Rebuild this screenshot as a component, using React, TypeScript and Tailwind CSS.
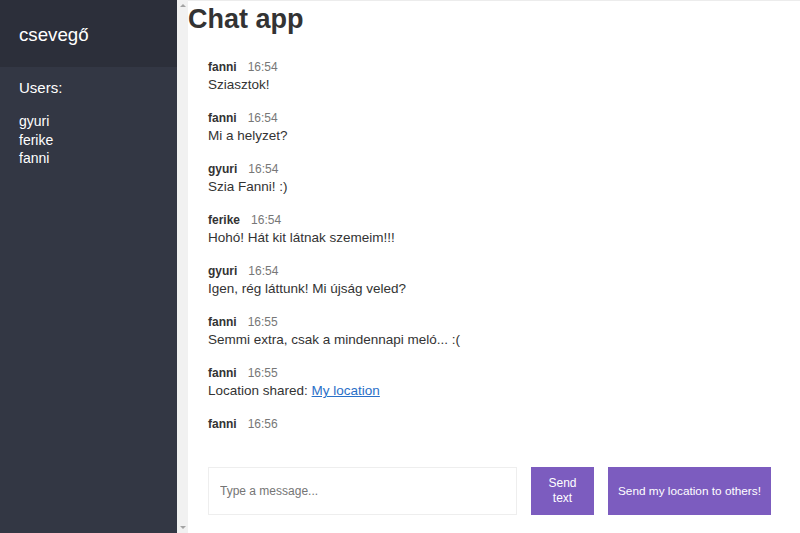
import React from "react";

const messages = [
  { name: "fanni", time: "16:54", text: "Sziasztok!" },
  { name: "fanni", time: "16:54", text: "Mi a helyzet?" },
  { name: "gyuri", time: "16:54", text: "Szia Fanni! :)" },
  { name: "ferike", time: "16:54", text: "Hohó! Hát kit látnak szemeim!!!" },
  { name: "gyuri", time: "16:54", text: "Igen, rég láttunk! Mi újság veled?" },
  { name: "fanni", time: "16:55", text: "Semmi extra, csak a mindennapi meló... :(" },
  { name: "fanni", time: "16:55", text: "", link: true },
  { name: "fanni", time: "16:56", text: "" },
];

export default function App() {
  return (
    <div
      className="flex h-[533px] w-[800px] overflow-hidden bg-white text-[#333]"
      style={{ fontFamily: '"Liberation Sans", Arial, sans-serif' }}
    >
      {/* Sidebar */}
      <div className="flex w-[177px] shrink-0 flex-col bg-[#333744] text-white">
        <div className="h-[67px] bg-[#2c2f3a] px-[19px] pt-[24px] text-[18.72px] leading-[22px]">
          csevegő
        </div>
        <div className="px-[19px] pt-[12px] text-[15px] leading-[18px]">Users:</div>
        <ul className="px-[19px] pt-[15px] text-[14px] leading-[18.5px]">
          <li>gyuri</li>
          <li>ferike</li>
          <li>fanni</li>
        </ul>
      </div>

      {/* Scrollbar strip */}
      <div className="flex w-[11px] shrink-0 flex-col items-center justify-between bg-[#f1f1f1] py-[4px]">
        <div className="h-0 w-0 border-x-[3px] border-b-[3px] border-x-transparent border-b-[#a3a3a3]" />
        <div className="h-0 w-0 border-x-[3px] border-t-[3px] border-x-transparent border-t-[#a3a3a3]" />
      </div>

      {/* Main */}
      <div className="flex min-w-0 flex-1 flex-col border-t border-[#ececec]">
        <h1 className="mt-[5px] text-[27px] font-bold leading-[27px]">Chat app</h1>
        <div className="flex-1 overflow-hidden px-[20px] pt-[26px]">
          {messages.map((m, i) => (
            <div key={i} className="mb-[15px]">
              <div className="text-[12px] leading-[16px]">
                <span className="font-bold">{m.name}</span>
                <span className="ml-[11px] text-[#777]">{m.time}</span>
              </div>
              {m.link ? (
                <div className="text-[13.5px] leading-[20px]">
                  Location shared:{" "}
                  <a href="#" className="text-[#2a70c8] underline">
                    My location
                  </a>
                </div>
              ) : m.text ? (
                <div className="text-[13.5px] leading-[20px]">{m.text}</div>
              ) : null}
            </div>
          ))}
        </div>
        <div className="flex gap-[14px] px-[20px] pb-[18px]">
          <input
            className="h-[48px] w-[309px] border border-[#eeeeee] px-[11px] text-[12px] outline-none placeholder:text-[#757575]"
            placeholder="Type a message..."
          />
          <button className="h-[48px] w-[63px] bg-[#7c5cbf] px-[8px] text-[12px] leading-[15px] text-white">
            Send text
          </button>
          <button className="h-[48px] bg-[#7c5cbf] px-[10px] text-[11.8px] leading-[15px] text-white">
            Send my location to others!
          </button>
        </div>
      </div>
    </div>
  );
}
